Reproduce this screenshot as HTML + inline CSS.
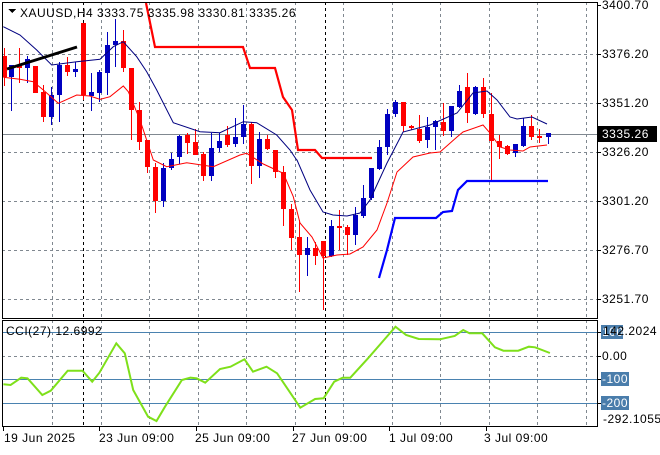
<!DOCTYPE html>
<html><head><meta charset="utf-8"><style>
html,body{margin:0;padding:0;background:#fff;}
body{width:660px;height:450px;overflow:hidden;font-family:"Liberation Sans",sans-serif;}
svg text{font-family:"Liberation Sans",sans-serif;font-size:12px;letter-spacing:0.5px;fill:#000;}
</style></head><body>
<svg id="s" width="660" height="450" viewBox="0 0 660 450" xmlns="http://www.w3.org/2000/svg" shape-rendering="crispEdges">
<rect width="660" height="450" fill="#fff"/>
<g id="grid" stroke="#808890" stroke-dasharray="3,3" stroke-width="1"></g>
<line x1="2" y1="134.5" x2="597" y2="134.5" stroke="#808890"/>
<line x1="2" y1="332.5" x2="597" y2="332.5" stroke="#4a82b0"/>
<line x1="2" y1="379.5" x2="597" y2="379.5" stroke="#4a82b0"/>
<line x1="2" y1="403.5" x2="597" y2="403.5" stroke="#4a82b0"/>
<line x1="83.5" y1="2" x2="83.5" y2="426" stroke="#000" stroke-dasharray="3,3"/>
<line x1="325.5" y1="2" x2="325.5" y2="426" stroke="#000" stroke-dasharray="3,3"/>
<g id="candles"></g>
<g shape-rendering="auto" fill="none">
<polyline id="bma" stroke="#000080" stroke-width="1"/>
<polyline id="rma" stroke="#ff0000" stroke-width="1"/>
<polyline points="146,3 155,47 243,47 250,68 275,68 283,97 292,110 298,150 315,150 322,158 372,158" stroke="#ff0000" stroke-width="2.2"/>
<polyline points="379,278 387,250 395,218 436,218 443,212 452,211 458,190 467,181 548,181" stroke="#0000ff" stroke-width="2.2"/>
<line x1="7" y1="69" x2="77" y2="47" stroke="#000" stroke-width="3"/>
<polyline id="cci" stroke="#7ee01a" stroke-width="2"/>
</g>
<rect x="2.5" y="2.5" width="595" height="316" fill="none" stroke="#000"/>
<rect x="2.5" y="320.5" width="595" height="106" fill="none" stroke="#000"/>
<polygon points="8,9 16,9 12,13" fill="#000"/>
<text x="20" y="17">XAUUSD,H4  3333.75 3335.98 3330.81 3335.26</text>
<text x="6" y="335">CCI(27) 12.6992</text>
<g id="ticks" stroke="#000"></g>
<text x="602" y="9">3400.70</text>
<text x="602" y="58">3376.20</text>
<text x="602" y="107">3351.20</text>
<rect x="597" y="126" width="60" height="16" fill="#000"/>
<text x="602" y="138" style="fill:#fff">3335.26</text>
<text x="602" y="156">3326.20</text>
<text x="602" y="205">3301.20</text>
<text x="602" y="254">3276.70</text>
<text x="602" y="303">3251.70</text>
<rect x="601" y="325" width="22" height="14" fill="#4a7dab"/>
<text x="602" y="336" style="fill:#fff">100</text>
<text x="603" y="335">142.2024</text>
<text x="602" y="360">0.00</text>
<rect x="601" y="372" width="28" height="14" fill="#4a7dab"/>
<text x="602" y="383" style="fill:#fff">-100</text>
<rect x="601" y="396" width="28" height="14" fill="#4a7dab"/>
<text x="602" y="407" style="fill:#fff">-200</text>
<text x="603" y="423">-292.1055</text>
<text x="4" y="442">19 Jun 2025</text>
<text x="99" y="442">23 Jun 09:00</text>
<text x="195" y="442">25 Jun 09:00</text>
<text x="292" y="442">27 Jun 09:00</text>
<text x="389" y="442">1 Jul 09:00</text>
<text x="484" y="442">3 Jul 09:00</text>
</svg>
<script>
var NS="http://www.w3.org/2000/svg";
function el(p,t,a){var e=document.createElementNS(NS,t);for(var k in a)e.setAttribute(k,a[k]);p.appendChild(e);return e;}
var g=document.getElementById('grid');
[54,103,152,201,250,299,356].forEach(function(y){el(g,'line',{x1:2,y1:y+.5,x2:597,y2:y+.5});});
for(var k=0;k<12;k++){var x=Math.round(52+48.5*k)+.5;if(Math.abs(x-83.5)<3||Math.abs(x-325.5)<3)continue;
el(g,'line',{x1:x,y1:2,x2:x,y2:318});el(g,'line',{x1:x,y1:320,x2:x,y2:426});}
var t=document.getElementById('ticks');
[5,54,103,152,201,250,299,332,356,379,403].forEach(function(y){el(t,'line',{x1:597,y1:y+.5,x2:601,y2:y+.5});});
[3,99,196,293,389,486].forEach(function(x){el(t,'line',{x1:x+.5,y1:427,x2:x+.5,y2:431});});
var C=[[4,'r',48,56,77,86],[11,'b',65,65,77,111],[19,'r',48,65,68,83],[27,'b',56,59,68,83],[35,'r',66,66,93,93],
[43,'r',85,92,117,122],[51,'b',87,95,117,125],[59,'b',62,65,95,122],[67,'r',57,65,72,76],[75,'b',62,69,72,77],
[83,'r',23,23,95,100],[91,'b',73,92,96,111],[99,'b',70,72,93,102],[107,'b',32,45,73,95],[115,'b',19,41,45,67],
[123,'r',30,41,68,72],[131,'r',68,68,110,140],[139,'r',102,110,142,150],[147,'r',140,140,167,173],[155,'r',163,167,201,213],
[163,'b',163,168,201,207],[171,'b',153,159,168,170],[179,'b',135,136,157,164],[187,'r',133,135,143,154],[195,'r',129,142,155,154],
[203,'r',152,154,176,181],[211,'b',133,148,176,181],[219,'b',133,141,148,152],[227,'r',126,135,145,147],[235,'b',118,137,144,147],
[243,'b',105,124,137,144],[251,'r',122,124,166,184],[259,'b',132,139,166,178],[267,'r',135,139,149,150],[275,'r',150,150,172,178],
[283,'r',166,172,209,226],[291,'r',204,209,238,250],[299,'r',220,237,255,292],[307,'b',237,248,255,276],[315,'r',242,248,256,265],
[323,'r',241,241,256,310],[331,'b',220,226,256,257],[339,'r',210,226,228,250],[347,'r',225,227,235,255],[355,'b',207,215,235,245],
[363,'b',185,198,216,218],[371,'b',168,168,198,200],[379,'b',140,147,169,170],[387,'b',109,114,147,155],[395,'b',100,102,114,117],
[403,'r',102,102,126,132],[411,'r',125,126,128,130],[419,'r',115,129,141,143],[427,'b',117,127,140,148],[435,'b',120,121,127,150],
[443,'r',103,122,131,136],[451,'b',106,106,131,137],[459,'b',85,91,107,108],[467,'r',73,87,113,123],[475,'b',86,87,114,115],
[483,'r',78,87,114,118],[491,'r',93,114,141,182],[499,'r',135,141,147,159],[507,'r',145,146,154,155],[515,'b',144,144,153,157],
[523,'b',118,126,146,147],[531,'r',115,126,137,140],[539,'r',129,136,138,143],[548,'b',133,133,137,144]];
var cg=document.getElementById('candles');
C.forEach(function(c){var col=c[1]=='r'?'#ff0000':'#0000c0';
el(cg,'rect',{x:c[0],y:c[2],width:1,height:Math.max(1,c[5]-c[2]),fill:col});
el(cg,'rect',{x:c[0]-2,y:c[3],width:5,height:Math.max(2,c[4]-c[3]),fill:col});});
function pts(a,sx,sy,ox,oy){var r=[];for(var i=0;i<a.length;i+=2)r.push((a[i]/sx+ox).toFixed(1)+','+(a[i+1]/sy+oy).toFixed(1));return r.join(' ');}
var b1=[10,80,60,105,110,150,155,195,230,185,300,178,340,140,370,125,410,170,440,215,470,270,520,368,600,395,660,398,730,365,770,368,830,405,870,450,890,480];
var bpts=pts(b1,3,3,0,0)+' 297,160 310,190 323,212 333,215 347,216 360,213 370,200 387,163 400,138 403,132 430,125 457,113 473,93 487,91 497,100 510,117 517,119 532,117 547,124';
document.getElementById('bma').setAttribute('points',bpts);
var r1=[10,232,60,238,100,245,130,270,175,310,230,285,270,288,300,298,330,290,370,258,385,275,420,360,460,480,500,500,560,488,640,500,720,465,740,460,790,492,850,520,880,590];
var rpts=pts(r1,3,3,0,0)+' 300,223 312,237 323,258 337,255 350,254 363,247 377,230 387,203 397,172 413,157 430,153 440,152 457,137 463,132 483,125 490,133 500,147 510,150 523,151 530,147 547,145';
document.getElementById('rma').setAttribute('points',rpts);
var cc=[8,478,25,480,50,458,65,460,100,510,120,497,160,437,195,437,218,470,235,443,275,355,295,385,315,495,350,575,370,588,390,545,430,465,450,458,465,460,485,473,520,432,545,425,578,403,598,440,630,425,655,445,710,548,745,522,765,520,790,470,810,458,828,458,870,400,935,305,960,330,990,342,1040,343,1075,333,1095,315,1110,325,1140,325,1170,367,1190,377,1225,377,1250,365,1265,367,1300,384];
document.getElementById('cci').setAttribute('points',pts(cc,2.364,3,0,225));
</script>
</body></html>
